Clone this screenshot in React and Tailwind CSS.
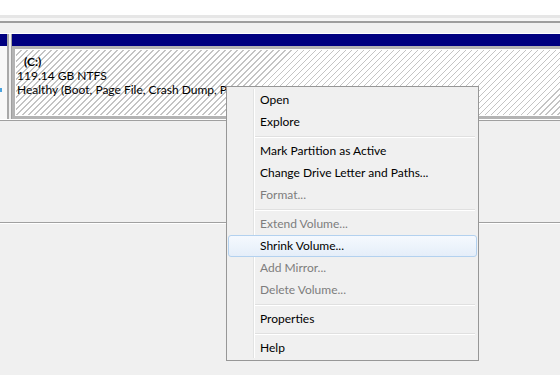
const items = [
  { label: "Open" },
  { label: "Explore" },
  { sep: true },
  { label: "Mark Partition as Active" },
  { label: "Change Drive Letter and Paths..." },
  { label: "Format...", disabled: true },
  { sep: true },
  { label: "Extend Volume...", disabled: true },
  { label: "Shrink Volume...", active: true },
  { label: "Add Mirror...", disabled: true },
  { label: "Delete Volume...", disabled: true },
  { sep: true },
  { label: "Properties" },
  { sep: true },
  { label: "Help" },
];

const ContextMenu = () => {
  return (
    <div className="absolute left-[226px] top-[86px] w-[253px] h-[275px] bg-[#f0f0f0] border border-[#979797] py-[2px] px-[1px]">
      {/* gutter line */}
      <div className="absolute left-[26px] top-[2px] bottom-[2px] w-px bg-[#e2e3e3]" />
      <div className="absolute left-[27px] top-[2px] bottom-[2px] w-px bg-white" />
      {items.map((item, i) =>
        item.sep ? (
          <div key={i} className="h-[7px] flex items-center pl-[27px] pr-[2px]">
            <div className="w-full">
              <div className="h-px bg-[#e0e0e0]" />
              <div className="h-px bg-white" />
            </div>
          </div>
        ) : (
          <div
            key={i}
            className={
              item.active
                ? "relative h-[22px] flex items-center pl-[31px] rounded-[3px] border border-[#b3d1ef] bg-[linear-gradient(#f5f9fe,#e5eef9)] text-black"
                : item.disabled
                ? "relative h-[22px] flex items-center pl-[32px] text-[#7d7d7d]"
                : "relative h-[22px] flex items-center pl-[32px] text-black"
            }
          >
            {item.label}
          </div>
        )
      )}
    </div>
  );
};

export default function App() {
  return (
    <div
      className="relative w-[560px] h-[375px] overflow-hidden bg-[#f0f0f0] text-[12px] leading-none"
      style={{ fontFamily: "Lato, 'Noto Sans', sans-serif" }}
    >
      <div className="h-[15px] bg-white" />
      <div className="h-[3px] bg-[#e6e6e6]" />
      <div className="h-[3px] bg-[#f6f6f6]" />
      <div className="h-[2px] bg-[#9d9d9d]" />
      <div className="h-[10px] bg-[#f0f0f0]" />
      <div className="h-px bg-white" />

      <div className="flex h-[85px]">
        <div className="w-[9px] flex flex-col border-r-2 border-[#a9a9a9]">
          <div className="h-[12px] bg-[#000080]" />
          <div className="flex-1 bg-[#f8f8f8] relative">
            <div className="absolute left-0 top-[42px] w-[2px] h-[4px] bg-[#4aa3df]" />
          </div>
        </div>
        <div className="w-[2px] bg-[#f0f0f0]" />
        <div className="flex-1 flex flex-col border-l border-[#a0a0a0]">
          <div className="h-[12px] bg-[#000080]" />
          <div className="flex-1 border-[3px] border-[#b4b4b4] border-r-0">
            <div className="h-full border border-white border-r-0 bg-[repeating-linear-gradient(135deg,#ffffff_0px,#ffffff_3.2px,#c4c4c4_3.2px,#c4c4c4_4.25px)] pl-[1px] pt-[6px] text-[12px] text-black">
              <div className="font-bold pl-[7px] h-[14px]">(C:)</div>
              <div className="h-[14px]">119.14 GB NTFS</div>
              <div className="h-[14px] w-[209px] overflow-hidden whitespace-nowrap">
                Healthy (Boot, Page File, Crash Dump, Primary Partition)
              </div>
            </div>
          </div>
        </div>
      </div>
      <div className="h-px bg-white" />
      <div className="h-px bg-[#a0a0a0]" />

      <div className="h-[101px]" />
      <div className="h-px bg-[#a0a0a0]" />
      <div className="h-px bg-white" />

      <ContextMenu />
    </div>
  );
}
